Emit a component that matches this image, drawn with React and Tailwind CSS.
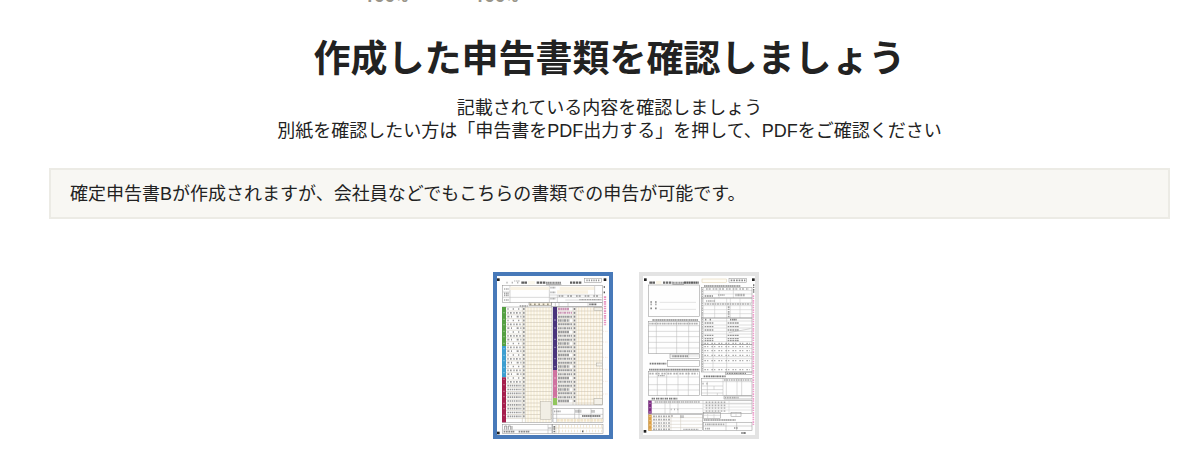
import React, { useState } from 'react';

const range = (from, to, step) => {
    const out = [];
    for (let v = from; v < to; v += step) out.push(v);
    return out;
};

// Ruled area: outer frame with optional inner rows / columns
const Grid = ({ x, y, w, h, rows = [], cols = [], stroke = '#a9a9a9', fill = 'none', frame = '#8b8b8b' }) => (
    <g fill="none" strokeWidth="1.5">
        <path stroke={stroke} d={rows.map((r) => `M${x} ${r}H${x + w}`).join('') + cols.map((c) => `M${c} ${y}V${y + h}`).join('')} />
        <rect x={x} y={y} width={w} height={h} stroke={frame} fill={fill} />
    </g>
);

// Row of small print
const Print = ({ x, y, to, color = '#a2a2a2', size = 5, dash = '4 2 5 1 3 1' }) => (
    <path d={`M${x} ${y}H${to}`} stroke={color} strokeWidth={size} strokeDasharray={dash} opacity=".85" />
);

const VPrint = ({ x, y, to, color, size = 5 }) => (
    <path d={`M${x} ${y}V${to}`} stroke={color} strokeWidth={size} strokeDasharray="5 2 4 3" />
);

const Mark = ({ x, y }) => <rect x={x - 4} y={y - 4} width="8" height="8" fill="#222222" />;

const leftRows = range(129, 462, 11.5);
const rightRows = range(129, 410, 11.5);

const FirstSheet = () => (
    <svg viewBox="27 24 336 477" className="block h-auto w-full" aria-hidden="true">
        <rect x="27" y="24" width="336" height="477" fill="#fefefe" />
        <Mark x={31} y={35} />
        <Mark x={351} y={35} />
        <Mark x={31} y={495} />
        <Print x={347} to={353} y={57} color="#333333" />
        <Print x={347} to={353} y={73} color="#333333" />
        <Grid x={290} y={31} w={51} h={12} stroke="#bbbbbb" />
        <Print x={295} to={337} y={37} color="#888888" dash="4 3" />
        <Print x={55} to={94} y={44} color="#aaaaaa" dash="4 12" />
        <Print x={78} to={96} y={39} color="#aaaaaa" size={3} />
        <Print x={100} to={118} y={44} color="#444444" size={7} dash="8 1" />
        <rect x="120" y="39" width="21" height="10" fill="#fbf8ed" />
        <Print x={146} to={174} y={44} color="#444444" size={7} dash="7 2" />
        <Print x={174} to={220} y={44} color="#777777" size={6} dash="5 1 3 1" />
        <path d="M174 49H220" stroke="#555" strokeWidth="1.5" />
        <Print x={246} to={282} y={44} color="#444444" size={7} dash="7 2" />

        {/* name and address block */}
        <Grid x={44} y={53} w={299} h={51} cols={[66, 184]} />
        <path d="M67 61H184M215 61H320M207 72H300" stroke="#f9f2e3" strokeWidth="10" />
        <path d="M44 72H66M44 88H343M184 81H343M208 81V104M232 96H343M320 54V81" stroke="#b5b5b5" strokeWidth="1.5" fill="none" />
        <Print x={48} to={62} y={63} />
        <Print x={48} to={62} y={76} color="#999999" />
        <Print x={48} to={62} y={82} color="#999999" />
        <Print x={48} to={62} y={96} />
        <Print x={187} to={203} y={59} />
        <Print x={187} to={203} y={73} />
        <Print x={187} to={203} y={92} />
        <Print x={212} to={340} y={84} color="#888888" size={4} dash="5 3 6 12" />
        <Print x={274} to={340} y={95} color="#999999" size={4} />
        <Grid x={123} y={104} w={68} h={9} cols={[134, 148, 160, 174]} fill="#f7f0df" />
        <Grid x={191} y={104} w={152} h={11} cols={[202, 213, 240, 300]} />
        <Print x={95} to={119} y={114} color="#888888" size={4} />
        <Print x={125} to={187} y={109} color="#8b8472" dash="5 8" />
        <Print x={304} to={327} y={109} color="#555555" />

        {/* left column: income, deductions, tax */}
        <rect x="112" y="117" width="80" height="346" fill="#fdf9ef" />
        <rect x="264" y="117" width="80" height="294" fill="#fdf9ef" />
        <g stroke="#eedfc0" strokeWidth="2">
            {range(120, 190, 9).map((v) => <path key={v} d={`M${v} 118V463`} />)}
            {range(272, 342, 9).map((v) => <path key={v} d={`M${v} 118V411`} />)}
        </g>
        <Grid x={44} y={117} w={148} h={346} rows={leftRows} cols={[103, 112]} stroke="#c5bdac" />
        {leftRows.map((r, i) => (
            <g key={r}>
                <Print x={58} to={100} y={r - 6} color="#8c8c8c" dash={i > 19 ? '5 2 4 2' : ['4 12', '4 4 5 5', '6 5 3 14'][i % 3]} />
                <rect x="105" y={r - 9} width="5" height="6" fill="#999999" />
            </g>
        ))}
        <rect x="42" y="117" width="12" height="117" fill="#55a043" />
        <rect x="42" y="234" width="12" height="94" fill="#3d9ed0" />
        <rect x="42" y="328" width="12" height="135" fill="#a51f4d" />
        <path d="M48 132V456" stroke="#ffffff" strokeWidth="4" strokeDasharray="4 16 4 12" opacity=".4" />
        <Grid x={157} y={401} w={32} h={54} rows={range(410, 455, 9)} cols={[165, 173, 181]} fill="#f1eee5" stroke="#b8b4a9" frame="#b8b4a9" />

        {/* right column */}
        <Grid x={196} y={117} w={148} h={294} rows={rightRows} cols={[207, 255, 264]} stroke="#c5bdac" />
        {rightRows.map((r, i) => (
            <g key={r}>
                <Print x={210} to={i % 3 ? 252 : 244} y={r - 6} color={i < 2 ? '#c383a8' : '#8a8a8a'} size={i % 3 ? 6 : 8} dash={i % 2 ? '4 1 6 2' : '7 1 4 1'} />
                <rect x="257" y={r - 9} width="5" height="6" fill="#888888" />
            </g>
        ))}
        <rect x="195" y="117" width="12" height="189" fill="#49357c" />
        <rect x="195" y="306" width="12" height="84" fill="#cf73a0" />
        <rect x="195" y="390" width="12" height="21" fill="#91c65d" />
        <path d="M201 154V406" stroke="#ffffff" strokeWidth="4" strokeDasharray="4 20 4 30" opacity=".5" />
        <Grid x={318} y={119} w={25} h={9} cols={[326, 334]} fill="#f4f1e9" stroke="#aaa79e" frame="#aaa79e" />
        <Grid x={325} y={285} w={18} h={9} cols={[334]} fill="#f4f1e9" stroke="#aaa79e" frame="#aaa79e" />
        <Grid x={318} y={391} w={25} h={18} rows={[400]} cols={[326, 334]} fill="#f4f1e9" stroke="#aaa79e" frame="#aaa79e" />
        <VPrint x={351} y={85} to={172} color="#e792c0" size={7} />
        <path d="M346 190H359M346 222H359M346 268H359M346 304H359M346 340H359M346 378H359" stroke="#e9cdb8" strokeWidth="2" strokeDasharray="2 3" />

        {/* refund account and office use */}
        <Grid x={195} y={422} w={150} h={41} rows={[439, 451]} cols={[206, 260, 273, 309]} />
        <path d="M207 457H344" stroke="#f1e4c8" strokeWidth="9" strokeDasharray="8 2" />
        <Print x={198} to={220} y={430} />
        <Print x={262} to={280} y={430} size={9} />
        <Print x={282} to={338} y={444} color="#777777" size={6} dash="5 1 4 1" />
        <Print x={310} to={320} y={430} size={8} />
        <Grid x={44} y={470} w={148} h={27} rows={[486]} cols={[180]} />
        <path d="M50 485V474H56V485M61 485V474H68V485M72 485V474" stroke="#777" strokeWidth="2" fill="none" />
        <Print x={47} to={80} y={491} color="#777777" />
        <Print x={92} to={125} y={491} color="#777777" />
        <Print x={181} to={190} y={480} />
        <Grid x={193} y={470} w={152} h={27} rows={[480]} cols={[204, 212]} stroke="#d2c5aa" />
        <path d="M214 475H344M214 489H344" stroke="#eee0c3" strokeWidth="8" strokeDasharray="2 7" />
        <VPrint x={199} y={474} to={496} color="#777777" />
        <Print x={282} to={287} y={490} color="#444444" />
    </svg>
);

const SecondSheet = () => (
    <svg viewBox="27 24 336 477" className="block h-auto w-full" aria-hidden="true">
        <rect x="27" y="24" width="336" height="477" fill="#fefefe" />
        <Mark x={34} y={35} />
        <Mark x={358} y={35} />
        <Mark x={33} y={490} />
        <Print x={46} to={64} y={44} color="#444444" size={7} dash="8 1" />
        <rect x="66" y="39" width="16" height="10" fill="#fbf6e8" />
        <Print x={87} to={115} y={44} color="#555555" size={7} dash="7 2" />
        <Print x={115} to={150} y={44} color="#888888" size={6} dash="5 1 3 1" />
        <path d="M115 49H150" stroke="#555" strokeWidth="1.5" />
        <Print x={150} to={194} y={44} color="#444444" size={7} dash="6 1" />
        <Grid x={204} y={33} w={73} h={11} cols={range(213, 276, 9)} frame="#d9cba9" stroke="#eadfc4" fill="#fffdf6" />
        <Grid x={285} y={31} w={53} h={12} stroke="#bbbbbb" />
        <Print x={290} to={334} y={37} color="#777777" dash="5 3" />

        {/* taxpayer */}
        <Grid x={43} y={51} w={153} h={94} />
        <path d="M77 103H186M77 124H186" stroke="#c8c8c8" strokeWidth="1.5" />
        <Print x={49} to={68} y={102} color="#777777" dash="5 9" />
        <Print x={49} to={68} y={109} dash="5 9" />
        <Print x={49} to={68} y={121} color="#777777" dash="5 9" />

        {/* income breakdown */}
        <Print x={55} to={192} y={156} color="#777777" dash="5 1 4 1" />
        <Grid x={43} y={161} w={153} h={96} rows={[173, 190, 206, 223, 240]} cols={[67, 128, 164]} stroke="#b8b8b8" />
        <Print x={46} to={192} y={167} />
        <Grid x={108} y={258} w={88} h={13} rows={[264]} cols={[164]} stroke="#c4c4c4" />
        <Print x={115} to={162} y={265} color="#888888" size={6} />

        <Print x={47} to={97} y={287} color="#666666" />
        <Grid x={101} y={278} w={95} h={18} />

        <Print x={45} to={196} y={305} color="#777777" dash="5 1 4 1" />
        <Grid x={43} y={311} w={153} h={72} rows={[327, 350, 366]} cols={[70, 98, 132, 163]} stroke="#b8b8b8" />
        <Print x={46} to={192} y={317} dash="5 2 6 5" />
        <Print x={72} to={94} y={323} size={4} />

        {/* deductions */}
        <Print x={210} to={320} y={54} color="#777777" dash="5 1 4 1" />
        <Grid x={202} y={59} w={152} h={31} rows={[67, 78]} cols={[208, 255, 298]} stroke="#c0c0c0" />
        <Print x={216} to={345} y={63} dash="5 3 6 6" />
        <Print x={212} to={237} y={84} color="#777777" />
        <Print x={252} to={274} y={81} />
        <Print x={304} to={333} y={81} size={8} />
        <Grid x={202} y={90} w={152} h={60} rows={[104, 113, 125, 137]} cols={[208, 242, 278, 289, 318]} stroke="#c4c4c4" />
        <Print x={216} to={244} y={99} />
        <Print x={212} to={350} y={108} dash="5 2 6 2" />
        <VPrint x={284} y={115} to={149} color="#a5a5a5" />
        <Grid x={202} y={150} w={152} h={80} rows={[159, 171, 180, 190, 198, 208, 221]} cols={[208, 278]} stroke="#bdbdbd" />
        <Print x={213} to={231} y={155} color="#777777" dash="4 10" />
        <Print x={288} to={310} y={155} color="#777777" />
        {[165, 176, 186, 202, 212, 218].map((y) => (
            <g key={y}>
                <Print x={212} to={238} y={y} color="#858585" size={4} />
                <Print x={281} to={315} y={y} color="#858585" size={4} />
            </g>
        ))}
        <path d="M284 194L350 182" stroke="#aaaaaa" strokeWidth="1.5" />
        <Grid x={202} y={230} w={152} h={82} rows={[241, 254, 266, 272, 286, 298]} cols={[208, 237, 278]} stroke="#bdbdbd" />
        {[226, 236, 248, 262, 278, 305].map((y) => (
            <Print key={y} x={211} to={347} y={y} size={4} dash="5 3 4 9" />
        ))}
        <VPrint x={205} y={62} to={310} color="#aaaaaa" size={3} />
        <Grid x={274} y={312} w={80} h={8} />
        <Print x={278} to={336} y={316} color="#777777" size={4} />

        {/* business dependants */}
        <Print x={209} to={275} y={325} color="#666666" />
        <Grid x={202} y={331} w={152} h={52} rows={[341]} cols={[267, 277, 309, 323]} stroke="#b8b8b8" />
        <Print x={270} to={350} y={336} dash="5 2" />
        <Print x={205} to={222} y={347} dash="4 8" />
        <path d="M202 354H267M202 365H267M202 375H267M220 341V383M240 354V365M250 375V383" stroke="#b5b5b5" strokeWidth="1.5" fill="none" />
        <Grid x={270} y={384} w={84} h={9} />
        <Print x={272} to={314} y={389} />

        {/* resident tax */}
        <Print x={53} to={132} y={392} color="#666666" dash="5 1 4 3" />
        <Grid x={43} y={398} w={311} h={39} rows={[406]} cols={[93, 108, 132, 207]} stroke="#b8b8b8" />
        <Print x={62} to={198} y={402} dash="5 1 5 2" />
        <Print x={110} to={133} y={424} dash="3 7" />
        {[403, 412, 420, 429].map((y) => <Print key={y} x={215} to={276} y={y} dash="5 4" />)}
        <path d="M52 422H207M208 408H354M208 417H354M208 426H354M285 398V437" stroke="#c8c8c8" strokeWidth="1.5" fill="none" />
        <Grid x={43} y={440} w={163} h={48} rows={[449, 459, 469, 479]} cols={[111, 140]} stroke="#d0c9bd" />
        {[445, 455, 465, 474, 484].map((y) => <Print key={y} x={57} to={110} y={y} dash="6 2 4 3" />)}
        <Print x={112} to={118} y={444} size={6} />
        <Print x={139} to={149} y={446} size={8} />
        <Print x={148} to={193} y={484} size={4} />
        <Grid x={209} y={433} w={50} h={18} rows={[442]} cols={[221, 240]} stroke="#c0c0c0" />
        <Grid x={291} y={433} w={30} h={12} cols={[306]} stroke="#c0c0c0" />
        <Print x={209} to={305} y={456} color="#888888" dash="5 1 4 1" />
        <Grid x={209} y={463} w={145} h={24} rows={[474]} cols={[276, 308]} />
        <Print x={213} to={271} y={469} />
        <Print x={213} to={228} y={482} />
        <Print x={300} to={312} y={480} size={6} />
        <Print x={322} to={336} y={495} color="#666666" size={6} />
        <rect x="43" y="398" width="10" height="39" fill="#7d2a83" />
        <rect x="43" y="440" width="10" height="48" fill="#dda044" />
        <path d="M48 404V485" stroke="#ffffff" strokeWidth="4" strokeDasharray="4 9" opacity=".45" />
        <VPrint x={359} y={49} to={75} color="#777777" size={4} />
        <VPrint x={358} y={82} to={474} color="#ed9dcb" size={5} />
    </svg>
);

const sheets = [
    { id: 'first', label: '申告書B 第一表', Sheet: FirstSheet },
    { id: 'second', label: '申告書B 第二表', Sheet: SecondSheet },
];

const App = () => {
    const [selected, setSelected] = useState('first');

    return (
        <main className="min-h-screen bg-white pr-[30px] pb-8 pl-[49px] font-['Liberation_Sans','Noto_Sans_CJK_JP',sans-serif] text-lg text-[#222222]">
            {/* Progress of the previous steps, scrolled almost out of view */}
            <div className="flex h-1 items-end gap-[66px] overflow-hidden pl-[315px] font-['Roboto',sans-serif] font-bold text-[#99958a]">
                <span className="-mb-1 leading-6">100%</span>
                <span className="-mb-1 leading-6">100%</span>
            </div>

            <header className="pt-[30px] text-center">
                <h1 className="text-[37px] leading-[52px] font-bold">作成した申告書類を確認しましょう</h1>
                <p className="mt-[11px] leading-[23px]">
                    記載されている内容を確認しましょう
                    <br />
                    別紙を確認したい方は「申告書をPDF出力する」を押して、PDFをご確認ください
                </p>
            </header>

            <p className="mt-[25px] border-2 border-[#ecebe5] bg-[#f8f7f3] px-[19px] pt-3 pb-[10px] leading-[25px]">
                確定申告書Bが作成されますが、会社員などでもこちらの書類での申告が可能です。
            </p>

            <div className="mt-[53px] flex justify-center gap-[26px] pl-[33px]">
                {sheets.map(({ id, label, Sheet }) => (
                    <button
                        key={id}
                        type="button"
                        aria-label={label}
                        aria-pressed={selected === id}
                        onClick={() => setSelected(id)}
                        className={`w-[120px] border-4 ${selected === id ? 'border-[#4779b9]' : 'border-[#e3e3e3]'}`}
                    >
                        <Sheet />
                    </button>
                ))}
            </div>
        </main>
    );
};

export default App;
